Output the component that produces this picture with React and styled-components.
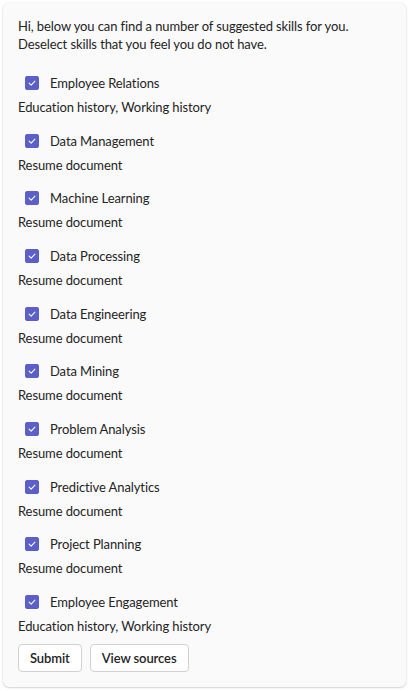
import React, { useState } from "react";
import styled, { createGlobalStyle } from "styled-components";

const Global = createGlobalStyle`
  html, body { margin: 0; padding: 0; background: #ffffff; }
  body { font-family: Lato, "Liberation Sans", sans-serif; color: #242424; }
  * { box-sizing: border-box; }
`;

const Card = styled.div`
  margin: 3px;
  width: 403px;
  height: 684px;
  background: #fafafa;
  border-radius: 6px;
  box-shadow: 0 0 2px rgba(0, 0, 0, 0.12), 0 1px 2px rgba(0, 0, 0, 0.14);
  padding: 14px 15px;
  font-size: 13px;
  letter-spacing: -0.1px;
  line-height: 18px;
`;

const Intro = styled.p`
  margin: 0 0 16px;
`;

const List = styled.div`
  display: flex;
  flex-direction: column;
  gap: 9.67px;
`;

const Item = styled.div`
  display: flex;
  flex-direction: column;
`;

const Row = styled.label`
  display: flex;
  align-items: center;
  height: 28px;
  padding-left: 7px;
  gap: 11px;
  cursor: pointer;
`;

const Box = styled.span`
  width: 14px;
  height: 14px;
  border-radius: 2px;
  background: ${(p) => (p.$checked ? "#5b5fc7" : "transparent")};
  border: 1px solid ${(p) => (p.$checked ? "#5b5fc7" : "#616161")};
  display: flex;
  align-items: center;
  justify-content: center;
  flex-shrink: 0;
`;

const Source = styled.div`
  line-height: 20px;
`;

const Actions = styled.div`
  display: flex;
  gap: 8px;
  margin-top: 8px;
`;

const Button = styled.button`
  height: 28px;
  padding: 0 11px;
  border: 1px solid #d1d1d1;
  border-radius: 4px;
  background: #ffffff;
  color: #242424;
  font-family: inherit;
  font-size: 13px;
  letter-spacing: -0.1px;
  font-weight: 600;
  cursor: pointer;
`;

const skills = [
  ["Employee Relations", "Education history, Working history"],
  ["Data Management", "Resume document"],
  ["Machine Learning", "Resume document"],
  ["Data Processing", "Resume document"],
  ["Data Engineering", "Resume document"],
  ["Data Mining", "Resume document"],
  ["Problem Analysis", "Resume document"],
  ["Predictive Analytics", "Resume document"],
  ["Project Planning", "Resume document"],
  ["Employee Engagement", "Education history, Working history"],
];

const Check = () => (
  <svg width="10" height="10" viewBox="0 0 12 12" fill="none">
    <path d="M2.5 6.2 L5 8.5 L9.5 3.8" stroke="#fff" strokeWidth="1.3" strokeLinecap="round" strokeLinejoin="round" />
  </svg>
);

export default function App() {
  const [checked, setChecked] = useState(skills.map(() => true));
  const toggle = (i) => setChecked((c) => c.map((v, j) => (j === i ? !v : v)));
  return (
    <>
      <Global />
      <Card>
        <Intro>
          Hi, below you can find a number of suggested skills for you.
          <br />
          Deselect skills that you feel you do not have.
        </Intro>
        <List>
          {skills.map(([name, src], i) => (
            <Item key={name}>
              <Row onClick={() => toggle(i)}>
                <Box $checked={checked[i]}>{checked[i] && <Check />}</Box>
                <span>{name}</span>
              </Row>
              <Source>{src}</Source>
            </Item>
          ))}
        </List>
        <Actions>
          <Button>Submit</Button>
          <Button>View sources</Button>
        </Actions>
      </Card>
    </>
  );
}
